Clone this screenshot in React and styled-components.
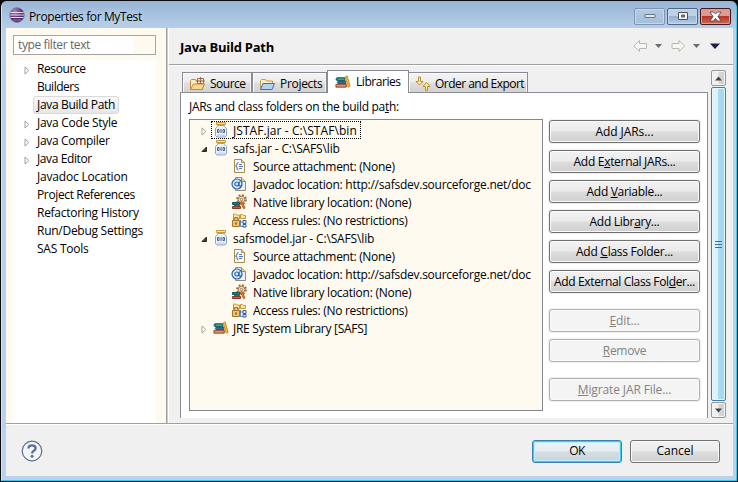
import React from 'react';
import styled, { createGlobalStyle, css } from 'styled-components';

const GlobalStyle = createGlobalStyle`
  * { box-sizing: border-box; }
  body { margin: 0; overflow: hidden; background: #000; }
  svg { display: block; flex: none; }
`;

const Frame = styled.div`
  width: 738px;
  height: 482px;
  padding: 1px;
  background: #0a0a0c;
  font: 12px/18px "Open Sans", "Noto Sans", sans-serif;
  color: #000;
`;
const Glass = styled.div`
  height: 480px;
  padding: 1px 3px 4px 4px;
  display: flex;
  flex-direction: column;
  border-radius: 6px 6px 0 0;
  border-right: 1px solid #35cdea;
  border-bottom: 1px solid #35cdea;
  border-left: 1px solid #d5e4f5;
  background: linear-gradient(#98b4d5, #b9d1ea 30px, #b9d1ea);
`;
const TitleBar = styled.header`
  height: 26px;
  flex: none;
  display: flex;
  align-items: center;
  padding: 0 2px 0 3px;
`;
const Title = styled.span`
  flex: 1;
  padding: 4px 0 0 4px;
  letter-spacing: -0.37px;
  text-shadow: 0 0 6px #dce9f7;
`;
const Captions = styled.div`
  display: flex;
  gap: 2px;
  padding-top: 2px;
`;
const CaptionButton = styled.div`
  width: 31px;
  height: 17px;
  display: grid;
  place-items: center;
  border: 1px solid ${p => (p.$tone === 'close' ? '#431a22' : p.$tone === 'dim' ? '#7e96b3' : '#52677f')};
  border-radius: 2px;
  box-shadow: inset 0 0 0 1px ${p => (p.$tone === 'close' ? '#dc9b91' : '#c4d8ee')};
  background: ${p =>
    p.$tone === 'close'
      ? 'linear-gradient(#dc9a90 0 45%, #b33625 50%, #cf6b4e)'
      : p.$tone === 'dim'
        ? 'linear-gradient(#b4cae4, #a4bedb)'
        : 'linear-gradient(#bed0e6 0 45%, #98b1cf 50%, #b5cde5)'};
`;

const Body = styled.div`
  display: grid;
  grid-template-columns: 162px 1fr;
  height: 395px;
  flex: none;
`;
const Sidebar = styled.aside`
  padding: 7px 10px 0 7px;
  background: #fffaef;
  border-right: 1px solid #a0a0a0;
  display: flex;
  flex-direction: column;
  gap: 5px;
  width: 161px;
`;
const FilterBox = styled.div`
  height: 20px;
  width: 143px;
  flex: none;
  border: 1px solid #a5a5a5;
  padding: 0 4px;
  line-height: 18px;
  color: #666;
  letter-spacing: -0.39px;
  background: linear-gradient(90deg, #fff 119px, #fffaef 119px);
`;
const Nav = styled.nav`
  flex: 1;
  width: 143px;
  background: #fff;
`;
const NavRow = styled.div`
  height: 18px;
  display: flex;
  align-items: center;
  padding-left: 11px;
`;
const Twisty = styled.span`
  width: 9px;
  flex: none;
  padding-top: 2px;
`;
const NavLabel = styled.span`
  height: 18px;
  padding: 0 3px;
  white-space: nowrap;
  letter-spacing: ${p => p.$ls}px;
  border: 1px solid transparent;
  border-radius: 3px;
  line-height: 16px;
  ${p => p.$selected && css`
    border-color: #d9d9d9;
    background: linear-gradient(#fafafa, #e6e6e6);
  `}
`;

const Main = styled.main`
  display: flex;
  flex-direction: column;
  background: #f0f0f0;
  border-left: 1px solid #fff;
`;
const PageHeader = styled.div`
  height: 37px;
  flex: none;
  display: flex;
  align-items: center;
  padding: 0 12px 0 11px;
  border-bottom: 1px solid #a0a0a0;
  box-shadow: 0 1px #fff;
`;
const PageTitle = styled.h1`
  flex: 1;
  margin: 0;
  padding-top: 1px;
  font-size: 13px;
  letter-spacing: -0.25px;
`;
const NavTools = styled.div`
  display: flex;
  align-items: center;
`;
const PageBody = styled.div`
  flex: 1;
  display: flex;
  padding: 5px 7px 5px 11px;
  gap: 3px;
`;
const TabFolder = styled.section`
  width: 528px;
  display: flex;
  flex-direction: column;
`;
const TabStrip = styled.div`
  height: 22px;
  display: flex;
  align-items: flex-end;
  padding-left: 2px;
  position: relative;
  z-index: 1;
`;
const Tab = styled.div`
  width: ${p => p.$w}px;
  height: ${p => (p.$active ? 23 : 20)}px;
  margin-bottom: ${p => (p.$active ? -1 : 0)}px;
  display: flex;
  align-items: center;
  gap: ${p => p.$gap}px;
  padding: ${p => (p.$active ? '0 0 1px 7px' : '2px 0 0 6px')};
  white-space: nowrap;
  letter-spacing: ${p => p.$ls}px;
  border: 1px solid #898c95;
  border-bottom: 0;
  border-left-width: ${p => (p.$joined ? 0 : 1)}px;
  background: ${p => (p.$active ? '#fff' : 'linear-gradient(#f3f3f3 0, #ececec 48%, #dedede 52%, #d2d2d2)')};
  box-shadow: ${p => (p.$active ? 'none' : 'inset 1px 1px #fbfbfb, inset -1px 0 #f3f3f3')};
`;
const TabPanel = styled.div`
  flex: 1;
  display: flex;
  flex-direction: column;
  padding: 5px 7px 7px 8px;
  background: #fff;
  border: 1px solid #898c95;
  border-bottom: 0;
`;
const Caption = styled.div`
  height: 21px;
  flex: none;
  letter-spacing: -0.32px;
`;
const Columns = styled.div`
  flex: 1;
  display: flex;
  gap: 6px;
`;
const Tree = styled.div`
  width: 355px;
  height: 292px;
  padding: 1px 0 0 8px;
  border: 1px solid #828790;
  background: #fffaef;
  overflow: hidden;
`;
const TreeRow = styled.div`
  height: 18px;
  display: flex;
  align-items: center;
  padding-left: ${p => (p.$child ? 31 : 3)}px;
`;
const TreeTwisty = styled.span`
  width: 10px;
  flex: none;
  padding-top: 2px;
`;
const TreeItem = styled.span`
  height: 18px;
  display: flex;
  align-items: center;
  gap: ${p => (p.$child ? 6 : 4)}px;
  padding: 0 4px 0 2px;
  line-height: 17px;
  white-space: nowrap;
  letter-spacing: ${p => p.$ls}px;
  ${p => p.$focused && css`
    outline: 1px dotted #000;
    outline-offset: -1px;
  `}
`;
const Buttons = styled.div`
  display: flex;
  flex-direction: column;
  gap: 7px;
  padding-top: 1px;
`;
const PushButton = styled.button`
  width: ${p => p.$w || 151}px;
  height: 23px;
  flex: none;
  margin: 0;
  margin-top: ${p => p.$space || 0}px;
  padding: 0 0 1px;
  font: inherit;
  line-height: 17px;
  letter-spacing: ${p => p.$ls}px;
  white-space: nowrap;
  color: #000;
  border: 1px solid #707070;
  border-radius: 3px;
  background: linear-gradient(#f2f2f2 0, #ebebeb 48%, #dddddd 52%, #cfcfcf);
  box-shadow: inset 0 0 0 1px #fafafa, 0 0 0 1px #f0f0f0;
  &:disabled {
    color: #838383;
    border-color: #adb2b5;
    background: #f4f4f4;
  }
  ${p => p.$primary && css`
    border-color: #3c7fb1;
    box-shadow: inset 0 0 0 1px #35cef5, inset 0 0 0 2px #b9effb;
    background: linear-gradient(#eef4f6 0, #e4edf1 48%, #d3dfe5 52%, #c8d4da);
  `}
`;

const ScrollBar = styled.div`
  width: 15px;
  height: 348px;
  display: flex;
  flex-direction: column;
  gap: 1px;
`;
const ScrollButton = styled.div`
  height: 16px;
  flex: none;
  display: grid;
  place-items: center;
  border: 1px solid #979797;
  border-radius: 2px;
  box-shadow: inset 0 0 0 1px #f4f4f4;
  background: linear-gradient(90deg, #f0f0f0 45%, #d6d6d6 55%, #cfcfcf);
`;
const Thumb = styled.div`
  flex: 1;
  display: grid;
  place-items: center;
  border: 1px solid #3c7fb1;
  border-radius: 2px;
  box-shadow: inset 0 0 0 1px #e6f6fd;
  background: linear-gradient(90deg, #def2fc 45%, #a9dbf5 50%, #a4d5ef);
`;

const Footer = styled.footer`
  flex: 1;
  display: flex;
  align-items: center;
  gap: 8px;
  padding: 2px 13px 0 15px;
  border-top: 1px solid #a0a0a0;
  box-shadow: inset 0 1px #fff;
  background: #f0f0f0;
`;
const Spacer = styled.span`
  flex: 1;
`;

/* ---- icons ---- */
const Closed = () => (
  <svg width="6" height="9" viewBox="0 0 6 9"><path d="M1 .9 4.8 4.5 1 8.1z" fill="#fff" stroke="#a0a0a0" /></svg>
);
const Open = () => (
  <svg width="7" height="7" viewBox="0 0 7 7"><path d="M5.5 1v4.5H1z" fill="#404040" stroke="#262626" /></svg>
);
const EclipseIcon = () => (
  <svg width="16" height="16" viewBox="0 0 16 16">
    <defs><radialGradient id="ec" cx=".35" cy=".25"><stop offset="0" stopColor="#a88bbd" /><stop offset="1" stopColor="#4d2c68" /></radialGradient></defs>
    <circle cx="8" cy="8" r="7.4" fill="url(#ec)" stroke="#9782ad" strokeWidth=".7" />
    <path d="M1.5 5.5h13M1 8h14M1.5 10.5h13" stroke="#e4d9ee" strokeWidth="1.1" />
    <path d="M4 13h8" stroke="#9a78b5" />
  </svg>
);
const JarIcon = () => (
  <svg width="16" height="16" viewBox="0 0 16 16">
    <path d="M4.500 3.500h7v1l2 2v7L12 15H4l-1.500-1.500v-7l2-2z" fill="#eaf2fb" stroke="#8ba5c9" />
    <path d="M4 12.500h8v1.500H4z" fill="#c5d8ee" />
    <path d="M3.500.5h9v2h-9z" fill="#f9e7ad" stroke="#c89a38" />
    <path d="M4.500 7.500h1.500v3H4.500zM10 7.500h1.500v3H10zM8 7v4" fill="#fff" stroke="#3d5078" strokeWidth=".9" />
  </svg>
);
const BooksIcon = () => (
  <svg width="16" height="16" viewBox="0 0 17 16">
    <path d="M2 3.500h8.500v3H2L1 5z" fill="#15866f" stroke="#0d5b57" />
    <path d="M3 5h7" stroke="#52b79e" />
    <path d="M3.500 7h8v3h-8L2.500 8.500z" fill="#2e6d9a" stroke="#245275" />
    <path d="M1 10.500h11v3H1z" fill="#cf7650" stroke="#94492c" />
    <path d="M2 12h9" stroke="#e9a27e" />
    <path d="m11 2.500 2-1 3 11-2 1z" fill="#f7ba3c" stroke="#d08a20" />
  </svg>
);
const SourceFolderIcon = () => (
  <svg width="17" height="14" viewBox="0 0 17 14">
    <path d="M1.500 12.500v-9l1-1h4l1 1.500h6v8.500z" fill="#fcecbc" stroke="#c08a42" />
    <path d="M8.500 1.500h6v5h-6zM11.500 0v7M7 4h9" fill="#f7e6cf" stroke="#93603a" strokeWidth=".9" />
    <path d="M1.500 12.500 4.500 7h11L13 12.500z" fill="#f8d68f" stroke="#c08a42" />
  </svg>
);
const FolderIcon = () => (
  <svg width="17" height="14" viewBox="0 0 17 14">
    <path d="M1.500 12.500v-9l1-1h4l1 1.500h6v3" fill="#fdf0c0" stroke="#c69a48" />
    <path d="M1.500 12.500 4 6.500h11.500L13 12.500z" fill="#b5d1f4" stroke="#4a6cb3" />
  </svg>
);
const OrderIcon = () => (
  <svg width="16" height="16" viewBox="0 0 16 16" fill="#fdf0b5" stroke="#c48a27">
    <path d="M3.500 1h2v4.500H8L4.500 9 1 5.500h2.500z" />
    <path d="M10.500 14.500h2v-4H15L11.500 6.500 8 10.500h2.500z" />
  </svg>
);
const SourceIcon = () => (
  <svg width="16" height="16" viewBox="0 0 16 16">
    <path d="M3.500 1.500h7l3 3v10h-10z" fill="#f5f9ff" stroke="#a88d4e" />
    <path d="M10.500 1.500v3h3" fill="#ecd79a" stroke="#a88d4e" />
    <path d="M7.500 4.500q-1.500 0-1.500 1.500t-1.500 2Q6 8 6 10t1.500 2" fill="none" stroke="#3c66a5" />
    <path d="M8 6.500h3M8 8.500h4M8 10.500h3" stroke="#5479b3" />
  </svg>
);
const JavadocIcon = () => (
  <svg width="16" height="16" viewBox="0 0 16 16">
    <path d="M4.500 1.500h6l4 4v9h-10z" fill="#eaf2fd" stroke="#9a8d6c" />
    <path d="M10.500 1.500v4h4" fill="#ecd28e" stroke="#a88d4e" />
    <circle cx="6" cy="8" r="5" fill="#deeafb" stroke="#2668ac" strokeWidth="1.200" />
    <circle cx="5.800" cy="8" r="2" fill="none" stroke="#2668ac" strokeWidth="1.200" />
    <path d="M8.300 5.500 7.800 9.500q1.700 1.500 3-.5" fill="none" stroke="#2668ac" strokeWidth="1.200" />
  </svg>
);
const NativeIcon = () => (
  <svg width="16" height="16" viewBox="0 0 16 16">
    <circle cx="10.500" cy="5.500" r="4.500" fill="none" stroke="#9c7047" strokeWidth="1.800" strokeDasharray="1.900 1.630" />
    <circle cx="10.500" cy="5.500" r="3.300" fill="#f7e6bd" stroke="#9c7047" />
    <circle cx="10.500" cy="5.500" r="1.200" fill="#fff" stroke="#9c7047" />
    <path d="M1.500 8.500h7v2h-7z" fill="#15866f" stroke="#0d5b57" />
    <path d="M3 11.500h6" stroke="#2e6d9a" strokeWidth="1.500" />
    <path d="M1.500 12.500h8v2h-8z" fill="#c4623b" stroke="#88391e" />
    <path d="m9.500 8 1.500-.5 3 6.500-1.500.5z" fill="#f58a2c" stroke="#c05a16" />
  </svg>
);
const AccessIcon = () => (
  <svg width="16" height="16" viewBox="0 0 16 16">
    <path d="M2.500 2h2l1 1h3v4h-6zM9.500 2.500h2l1 1h2v3h-5z" fill="#fbe3a0" stroke="#c6983e" />
    <path d="M9.500 8v6.500H12M9.500 10H12" fill="none" stroke="#6480ad" />
    <path d="M12 8.500h3v3h-3zM12 12.500h3v2.500h-3z" fill="#e0ecfb" stroke="#38619e" />
    <path d="M3 9V7.500q0-2 2-2t2 2V9" fill="none" stroke="#94702f" strokeWidth="1.200" />
    <path d="M1.500 8.500h7v6h-7z" fill="#efc571" stroke="#a4752a" />
    <path d="M5 10.500v2" stroke="#6e4c17" strokeWidth="1.400" />
  </svg>
);
const HelpIcon = () => (
  <svg width="22" height="22" viewBox="0 0 22 22">
    <circle cx="11" cy="11" r="9.800" fill="#f4f5f8" stroke="#5d6f8e" strokeWidth="1.200" />
    <path d="M7.500 8.500Q7.500 5.300 11 5.300t3.600 3q0 1.500-1.700 2.500T11.100 13.500" fill="none" stroke="#5b6e93" strokeWidth="2.300" />
    <circle cx="11.100" cy="16.200" r="1.500" fill="#5b6e93" />
  </svg>
);
const HistoryTools = () => (
  <svg width="88" height="14" viewBox="0 0 88 14">
    <g fill="#f7f7f0" stroke="#b9b9ae">
      <path d="M.8 7 6.500 1.500v3h7v5h-7v3z" />
      <path d="M51.700 7 46 1.500v3h-7v5h7v3z" />
    </g>
    <path d="M22 5h7l-3.500 4zM60 5h7l-3.500 4z" fill="#6d6d6d" />
    <path d="M77 4.500h10L82 10z" fill="#201c55" />
  </svg>
);

/* ---- data ---- */
const pages = [
  ['Resource', -0.4, true], ['Builders', -0.5], ['Java Build Path', -0.32], ['Java Code Style', -0.27, true],
  ['Java Compiler', -0.31, true], ['Java Editor', -0.4, true], ['Javadoc Location', -0.2],
  ['Project References', -0.36], ['Refactoring History', -0.28], ['Run/Debug Settings', -0.27], ['SAS Tools', -0.24],
];
const attributes = [
  { icon: SourceIcon, text: 'Source attachment: (None)', ls: -0.33 },
  { icon: JavadocIcon, text: 'Javadoc location: http://safsdev.sourceforge.net/doc', ls: -0.25 },
  { icon: NativeIcon, text: 'Native library location: (None)', ls: -0.25 },
  { icon: AccessIcon, text: 'Access rules: (No restrictions)', ls: -0.3 },
].map(a => ({ ...a, child: true }));
const entries = [
  { icon: JarIcon, text: 'JSTAF.jar - C:\\STAF\\bin', ls: 0.07, twisty: Closed, focused: true },
  { icon: JarIcon, text: 'safs.jar - C:\\SAFS\\lib', ls: -0.14, twisty: Open },
  ...attributes,
  { icon: JarIcon, text: 'safsmodel.jar - C:\\SAFS\\lib', ls: -0.15, twisty: Open },
  ...attributes,
  { icon: BooksIcon, text: 'JRE System Library [SAFS]', ls: -0.27, twisty: Closed },
];
const actions = [
  ['Add ', 'J', 'ARs...', -0.08], ['Add E', 'x', 'ternal JARs...', -0.3], ['Add ', 'V', 'ariable...', -0.3],
  ['Add Libr', 'a', 'ry...', -0.29], ['Add ', 'C', 'lass Folder...', -0.27], ['Add External Class Fol', 'd', 'er...', -0.37],
  ['', 'E', 'dit...', -0.1, true, 9], ['', 'R', 'emove', -0.29, true], ['', 'M', 'igrate JAR File...', -0.12, true, 9],
];

export default function App() {
  return (
    <Frame>
      <GlobalStyle />
      <Glass>
        <TitleBar>
          <EclipseIcon />
          <Title>Properties for MyTest</Title>
          <Captions>
            <CaptionButton $tone="dim">
              <svg width="12" height="6" viewBox="0 0 12 6"><path d="M1 1.500h10v3H1z" fill="#e9e9e5" stroke="#6d7784" /></svg>
            </CaptionButton>
            <CaptionButton>
              <svg width="12" height="10" viewBox="0 0 12 10"><path d="M1.500 1.500h9v7h-9z" fill="#f8f8f8" stroke="#475262" /><path d="M4.500 4h3v2h-3z" fill="#91aac8" stroke="#475262" /></svg>
            </CaptionButton>
            <CaptionButton $tone="close">
              <svg width="13" height="11" viewBox="0 0 13 11"><path d="M1 1h3.500l2 2 2-2H12L9 5.500l3 4.500H8.500l-2-2.500-2 2.500H1l3-4.500z" fill="#fff" stroke="#5b4a57" strokeWidth=".9" /></svg>
            </CaptionButton>
          </Captions>
        </TitleBar>
        <Body>
          <Sidebar>
            <FilterBox>type filter text</FilterBox>
            <Nav>
              {pages.map(([name, ls, expandable]) => (
                <NavRow key={name}>
                  <Twisty>{expandable && <Closed />}</Twisty>
                  <NavLabel $ls={ls} $selected={name === 'Java Build Path'}>{name}</NavLabel>
                </NavRow>
              ))}
            </Nav>
          </Sidebar>
          <Main>
            <PageHeader>
              <PageTitle>Java Build Path</PageTitle>
              <NavTools><HistoryTools /></NavTools>
            </PageHeader>
            <PageBody>
              <TabFolder>
                <TabStrip>
                  <Tab $w={70} $ls={-0.5} $gap={4}><SourceFolderIcon />Source</Tab>
                  <Tab $w={75} $ls={-0.3} $gap={4}><FolderIcon />Projects</Tab>
                  <Tab $w={82} $ls={-0.45} $gap={5} $active><BooksIcon />Libraries</Tab>
                  <Tab $w={119} $ls={-0.53} $gap={4} $joined><OrderIcon />Order and Export</Tab>
                </TabStrip>
                <TabPanel>
                  <Caption>JARs and class folders on the build pa<u>t</u>h:</Caption>
                  <Columns>
                    <Tree>
                      {entries.map(({ icon: Icon, twisty: Arrow, text, ls, child, focused }, i) => (
                        <TreeRow key={i} $child={child}>
                          {Arrow && <TreeTwisty><Arrow /></TreeTwisty>}
                          <TreeItem $ls={ls} $focused={focused} $child={child}><Icon />{text}</TreeItem>
                        </TreeRow>
                      ))}
                    </Tree>
                    <Buttons>
                      {actions.map(([before, key, after, ls, off, space]) => (
                        <PushButton key={before + key + after} $ls={ls} disabled={off} $space={space}>
                          {before}<u>{key}</u>{after}
                        </PushButton>
                      ))}
                    </Buttons>
                  </Columns>
                </TabPanel>
              </TabFolder>
              <ScrollBar>
                <ScrollButton><svg width="7" height="5" viewBox="0 0 7 5"><path d="M0 4.500 3.500.5 7 4.500z" fill="#444" /></svg></ScrollButton>
                <Thumb><svg width="7" height="9" viewBox="0 0 7 9"><path d="M0 1.500h7M0 4.500h7M0 7.500h7" stroke="#2f7796" /></svg></Thumb>
                <ScrollButton><svg width="7" height="5" viewBox="0 0 7 5"><path d="M0 .5 3.500 4.500 7 .5z" fill="#444" /></svg></ScrollButton>
              </ScrollBar>
            </PageBody>
          </Main>
        </Body>
        <Footer>
          <HelpIcon />
          <Spacer />
          <PushButton $w={90} $ls={-0.7} $primary>OK</PushButton>
          <PushButton $w={90} $ls={-0.05}>Cancel</PushButton>
        </Footer>
      </Glass>
    </Frame>
  );
}
